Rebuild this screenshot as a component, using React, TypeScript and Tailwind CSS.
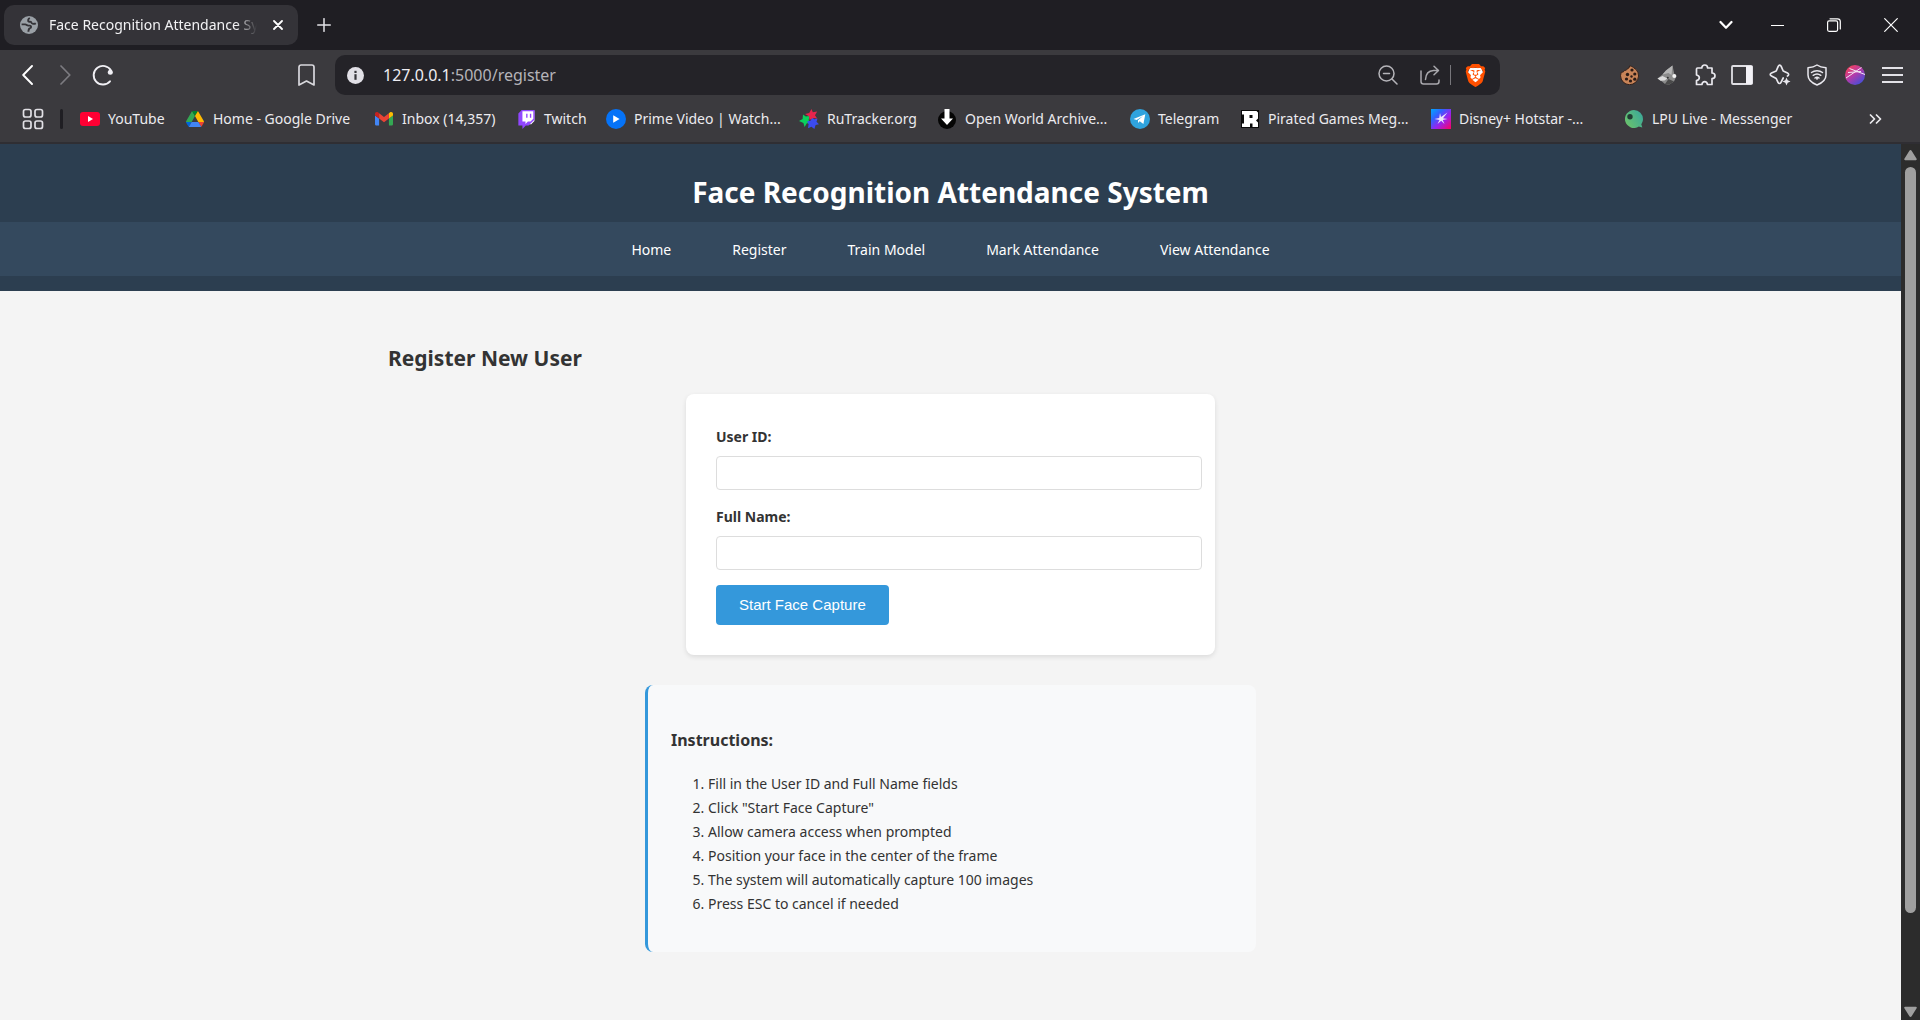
import type { ReactNode } from "react";
import { SiBrave, SiTwitch } from "react-icons/si";

const stroke = {
  fill: "none",
  stroke: "currentColor",
  strokeLinecap: "round" as const,
  strokeLinejoin: "round" as const,
};

function GlobeIcon() {
  return (
    <svg viewBox="0 0 18 18" className="size-[18px] shrink-0">
      <circle cx="9" cy="9" r="9" fill="#9aa0a6" />
      <path
        d="M1.6 8.400h3.600c1.400 0 1.600 1.200 3 1.200h1.600c1.600 0 1.800 2.200.2 2.600-1.400.3-1.500 1.200-1.600 3.600M15.800 7.200c-1.600 1.200-4.300.6-4.600-.8-.2-1-1.400-.4-2.400-.8-1.200-.6-.8-2.600 1-3.600"
        fill="none"
        stroke="#343338"
        strokeWidth="1.900"
      />
    </svg>
  );
}

function YouTubeIcon() {
  return (
    <svg viewBox="0 0 20 20" className="size-5">
      <rect y="3" width="20" height="14" rx="3" fill="#ff0033" />
      <path d="M8 7v6l5-3z" fill="#fff" />
    </svg>
  );
}

function DriveIcon() {
  return (
    <svg viewBox="0 0 87.3 78" className="size-[18px]">
      <path d="m6.6 66.850 3.850 6.650c.8 1.400 1.950 2.500 3.300 3.300l13.750-23.800h-27.500c0 1.550.4 3.100 1.200 4.500z" fill="#0066da" />
      <path d="m43.650 25-13.750-23.800c-1.350.8-2.500 1.900-3.300 3.300l-25.400 44a9.060 9.060 0 0 0 -1.200 4.500h27.500z" fill="#34a853" />
      <path d="m73.550 76.800c1.350-.8 2.500-1.900 3.300-3.300l1.600-2.750 7.650-13.250c.8-1.400 1.200-2.950 1.200-4.500h-27.502l5.852 11.500z" fill="#ea4335" />
      <path d="m43.650 25 13.750-23.800c-1.350-.8-2.900-1.200-4.500-1.200h-18.500c-1.600 0-3.150.45-4.500 1.200z" fill="#00832d" />
      <path d="m59.800 53h-32.300l-13.750 23.800c1.350.8 2.900 1.200 4.500 1.200h50.800c1.600 0 3.150-.45 4.500-1.200z" fill="#4285f4" />
      <path d="m73.400 26.500-12.700-22c-.8-1.400-1.950-2.500-3.300-3.300l-13.750 23.800 16.150 28h27.450c0-1.550-.4-3.100-1.200-4.500z" fill="#ffba00" />
    </svg>
  );
}

function GmailIcon() {
  return (
    <svg viewBox="52 42 88 66" className="w-[18px]">
      <path fill="#4285f4" d="M58 108h14V74L52 59v43c0 3.320 2.690 6 6 6" />
      <path fill="#34a853" d="M120 108h14c3.320 0 6-2.690 6-6V59l-20 15" />
      <path fill="#fbbc04" d="M120 48v26l20-15v-8c0-7.420-8.470-11.650-14.400-7.200" />
      <path fill="#ea4335" d="M72 74V48l24 18 24-18v26L96 92" />
      <path fill="#c5221f" d="M52 51v8l20 15V48l-5.600-4.200c-5.940-4.450-14.400-.22-14.400 7.200" />
    </svg>
  );
}

function TwitchIcon() {
  return (
    <span className="relative block size-[19px]">
      <svg viewBox="0 0 24 24" className="absolute inset-0 size-full">
        <path d="M6 1h16v13l-4 4H6z" fill="#fff" />
      </svg>
      <SiTwitch className="absolute inset-0 size-full text-[#9146ff]" />
    </span>
  );
}

function PrimeIcon() {
  return (
    <svg viewBox="0 0 20 20" className="size-5">
      <circle cx="10" cy="10" r="10" fill="#0573f8" />
      <path d="M7.200 6.200v7.600L13.600 10z" fill="#fff" />
    </svg>
  );
}

function RuTrackerIcon() {
  return (
    <svg viewBox="0 0 20 20" className="size-5">
      <path d="M4 5.500 6.800 7.600l4-.6-1.200 4 2 3.400-3.800-.2L5.600 18 4.400 14 0 12l3.600-2z" fill="#0bd05c" />
      <path d="m13 8 2.200 2.200 3.300-.6-1 3.200 2.500 2.400-3.400.8L15.400 20l-3-2.200L9 19.200l.6-4L8 12.400l3.800-.8z" fill="#3b4bef" />
      <path d="m12.500 0 1.300 3.200 4.400-.6-2.200 3.600 2.200 3.400-4.200-.6L10.600 11l-.6-3.800L6 4.900l4.200-1z" fill="#e6244d" />
    </svg>
  );
}

function DownloadIcon() {
  return (
    <svg viewBox="0 0 20 20" className="size-5">
      <circle cx="10" cy="11" r="9" fill="#050505" />
      <path d="M7.500 0h5v9.500H16l-6 6.500-6-6.500h3.500z" fill="#fff" />
    </svg>
  );
}

function TelegramIcon() {
  return (
    <svg viewBox="0 0 20 20" className="size-5">
      <circle cx="10" cy="10" r="10" fill="#2fa3de" />
      <path d="M3.500 10 15.300 5.300 13.400 15 9.700 12.300 8 14V11.200l5-4.200-6.400 4z" fill="#fff" />
    </svg>
  );
}

function PiratedIcon() {
  return (
    <svg viewBox="0 0 18 18" className="size-[18px]">
      <rect width="18" height="18" fill="#0b0b0b" />
      <path fillRule="evenodd" d="M1 1h14.500l1.500 1.500v6L15 10.500l2 2V17h-5.500V13.500H9V17H1v-3.500h2v-9H1zM8.500 5v3h3V5z" fill="#fff" />
    </svg>
  );
}

function HotstarIcon() {
  return (
    <svg viewBox="0 0 20 20" className="size-5">
      <defs>
        <linearGradient id="hotstar" x1="0" y1="0" x2="1" y2="1">
          <stop offset="0" stopColor="#00a8ff" />
          <stop offset=".3" stopColor="#2f63ff" />
          <stop offset=".6" stopColor="#9a22ee" />
          <stop offset="1" stopColor="#ff0060" />
        </linearGradient>
      </defs>
      <rect width="20" height="20" fill="url(#hotstar)" />
      <path d="m9 4 1 4 6.500-4.500-4.500 5.700 4.500.8-4.800.9L13.500 15l-3.300-3.300L6.500 15l2-4L3.500 10l4.700-1z" fill="#ece6fa" />
    </svg>
  );
}

function LpuIcon() {
  return (
    <svg viewBox="0 0 18 18" className="size-[18px]">
      <defs>
        <linearGradient id="lpu" x1="0" y1=".8" x2="1" y2=".2">
          <stop offset="0" stopColor="#6cc36a" />
          <stop offset="1" stopColor="#3aa89a" />
        </linearGradient>
      </defs>
      <path d="M9 0a9 9 0 0 1 9 9c0 2-.7 3.800-1.700 5.200l1 3.400-3.500-1A9 9 0 1 1 9 0z" fill="url(#lpu)" />
      <circle cx="5" cy="6.800" r="2.700" fill="#223c34" />
    </svg>
  );
}

type Bookmark = { label: string; icon: ReactNode; width: string };

const bookmarks: Bookmark[] = [
  { label: "YouTube", icon: <YouTubeIcon />, width: "w-[105px]" },
  { label: "Home - Google Drive", icon: <DriveIcon />, width: "w-[189px]" },
  { label: "Inbox (14,357)", icon: <GmailIcon />, width: "w-[142px]" },
  { label: "Twitch", icon: <TwitchIcon />, width: "w-[90px]" },
  { label: "Prime Video | Watch...", icon: <PrimeIcon />, width: "w-[193px]" },
  { label: "RuTracker.org", icon: <RuTrackerIcon />, width: "w-[138px]" },
  { label: "Open World Archive...", icon: <DownloadIcon />, width: "w-[193px]" },
  { label: "Telegram", icon: <TelegramIcon />, width: "w-[110px]" },
  { label: "Pirated Games Meg...", icon: <PiratedIcon />, width: "w-[191px]" },
  { label: "Disney+ Hotstar -...", icon: <HotstarIcon />, width: "w-[193px]" },
  { label: "LPU Live - Messenger", icon: <LpuIcon />, width: "w-[193px]" },
];

function TabStrip() {
  return (
    <div className="flex h-[50px] shrink-0 items-center bg-[#1f1e23] pl-1">
      <div className="flex h-10 w-[294px] items-center rounded-[10px] bg-[#343338] pr-[10px] pl-4">
        <GlobeIcon />
        <span className="ml-[11px] w-[208px] overflow-hidden mask-r-from-90% text-sm whitespace-nowrap text-[#f2f2f4]">
          Face Recognition Attendance System
        </span>
        <button aria-label="Close tab" className="ml-auto flex size-5 items-center justify-center text-white">
          <svg viewBox="0 0 10 10" className="size-[10px]" {...stroke} strokeWidth="1.800">
            <path d="m1 1 8 8M9 1 1 9" />
          </svg>
        </button>
      </div>
      <button aria-label="New tab" className="ml-4 flex size-5 items-center justify-center text-[#e4e3e8]">
        <svg viewBox="0 0 14 14" className="size-[14px]" {...stroke} strokeWidth="1.500">
          <path d="M7 .7v12.600M.7 7h12.600" />
        </svg>
      </button>
      <div className="ml-auto flex items-center text-white">
        <button aria-label="Search tabs" className="flex h-[50px] w-11 items-center justify-center">
          <svg viewBox="0 0 14 10" className="w-[14px]" {...stroke} strokeWidth="2.200">
            <path d="m1.500 2 5.500 5.800L12.500 2" />
          </svg>
        </button>
        <button aria-label="Minimize" className="flex h-[50px] w-[58px] items-center justify-center">
          <span className="h-px w-[13px] bg-white" />
        </button>
        <button aria-label="Restore" className="flex h-[50px] w-[55px] items-center justify-center">
          <svg viewBox="0 0 14 14" className="size-[14px]" {...stroke} strokeWidth="1.200">
            <rect x=".6" y="2.900" width="10" height="10.400" rx="1.500" />
            <path d="M3 .8h7.500c1.800 0 2.800 1 2.800 2.800V11" />
          </svg>
        </button>
        <button aria-label="Close" className="flex h-[50px] w-[59px] items-center justify-center">
          <svg viewBox="0 0 14 14" className="size-[14px]" {...stroke} strokeWidth="1.200">
            <path d="m.7.7 12.600 12.600M13.300.7.7 13.300" />
          </svg>
        </button>
      </div>
    </div>
  );
}

function ExtensionButton({ label, children }: { label: string; children: ReactNode }) {
  return (
    <button aria-label={label} className="flex h-8 items-center justify-center text-[#e9e8ee]">
      {children}
    </button>
  );
}

function Toolbar() {
  return (
    <div className="flex h-[50px] shrink-0 items-center">
      <button aria-label="Back" className="ml-[7px] flex size-10 items-center justify-center text-white">
        <svg viewBox="0 0 11 20" className="h-5" {...stroke} strokeWidth="1.900">
          <path d="M10 1 1.200 10l8.800 9" />
        </svg>
      </button>
      <button aria-label="Forward" className="ml-px flex w-[34px] items-center justify-center text-[#7c7b80]">
        <svg viewBox="0 0 11 20" className="h-5" {...stroke} strokeWidth="1.700">
          <path d="m1 1 8.800 9L1 19" />
        </svg>
      </button>
      <button aria-label="Reload" className="ml-[10px] flex size-[22px] items-center justify-center text-[#f0eff4]">
        <svg viewBox="0 0 22 22" className="size-[22px]" {...stroke} strokeWidth="1.900">
          <path d="M18 17.300A9.300 9.300 0 1 1 19 6.500" />
          <circle cx="18.300" cy="8.200" r="2.500" fill="currentColor" stroke="none" />
        </svg>
      </button>
      <button aria-label="Bookmark this page" className="mr-5 ml-[184px] text-[#d9d8dd]">
        <svg viewBox="0 0 17 22" className="h-[22px]" {...stroke} strokeWidth="1.700">
          <path d="M1 3.200C1 1.900 1.900 1 3.200 1h10.600C15.100 1 16 1.900 16 3.200V21l-7.500-4L1 21z" />
        </svg>
      </button>
      <div className="flex h-10 min-w-0 flex-1 items-center rounded-[10px] bg-[#242328] pl-3">
        <svg viewBox="0 0 17 17" className="size-[17px] shrink-0" aria-hidden="true">
          <circle cx="8.500" cy="8.500" r="8.500" fill="#e1e0e6" />
          <rect x="7.400" y="7.200" width="2.200" height="5.600" fill="#36353a" />
          <rect x="7.400" y="3.800" width="2.200" height="2.200" fill="#36353a" />
        </svg>
        <div className="ml-[19px] flex-1 text-base whitespace-nowrap text-[#b5b4b9]">
          <span className="text-[#eeedf2]">127.0.0.1</span>:5000/register
        </div>
        <button aria-label="Zoom" className="text-[#b5b4b9]">
          <svg viewBox="0 0 20 20" className="size-5" {...stroke} strokeWidth="1.500">
            <circle cx="8.500" cy="8.500" r="7.500" />
            <path d="m14 14 5 5M5.500 8.500h6" />
          </svg>
        </button>
        <button aria-label="Share" className="ml-[22px] text-[#a9a8ad]">
          <svg viewBox="0 0 20 20" className="size-5" {...stroke} strokeWidth="1.500">
            <path d="M1 6v10.500C1 18 2 19 3.500 19h13c1.500 0 2.500-1 2.500-2.500V15" />
            <path d="M5.500 14.500C5.800 9 9 5.700 13.500 5.500H18M14 1.200l4.500 4.300L14 9.800" />
          </svg>
        </button>
        <span className="ml-[10px] h-5 w-px bg-[#77767b]" />
        <button aria-label="Brave Shields" className="relative mr-[13px] ml-[13px] block size-[23px]">
          <svg viewBox="0 0 24 24" className="absolute inset-0 size-full">
            <path d="M6 4h12l2 5-3 9-5 4-5-4-3-9z" fill="#fff" />
          </svg>
          <SiBrave className="absolute inset-0 size-full text-[#ff5000]" />
        </button>
      </div>
      <div className="mr-[9px] ml-[111px] grid w-[300px] grid-cols-8">
        <ExtensionButton label="Cookie editor">
          <svg viewBox="0 0 20 20" className="size-5">
            <path
              d="M10.500 1c0 1.600.8 2.600 2.200 2.600.3 1.400 1.300 2 2.600 1.700.8 1.500 2 2 3.500 2A9 9 0 1 1 6.500 2.600C7.700 1.600 9 1 10.500 1z"
              fill="#c98458"
              stroke="#33221c"
              strokeWidth="1"
              transform="matrix(-1 0 0 1 20 0)"
            />
            <g fill="#2b1b16">
              <circle cx="12" cy="5" r="1.600" />
              <circle cx="7.500" cy="9.500" r="1.700" />
              <circle cx="14.800" cy="9" r="1.600" />
              <circle cx="11.500" cy="11.500" r="1.200" />
              <circle cx="6.500" cy="14" r="1.600" />
              <circle cx="10.500" cy="16" r="1.600" />
              <circle cx="14.800" cy="14.200" r="1.600" />
            </g>
          </svg>
        </ExtensionButton>
        <ExtensionButton label="Wolf extension">
          <svg viewBox="0 0 20 20" className="size-5">
            <path d="M15.500.5 9 5.500 5.500 9.500.5 13.500l3.500 2.300L8 19l4 .8 5-3.300 2.500-5.500-2-1z" fill="#8b8b8b" />
            <path d="M15.500.5 9 5.500 5.500 9.500l6-1.500 3 2z" fill="#b5b5b5" />
            <path d="m.5 13.500 5-2.500 5 2.500-3 2-4 .3z" fill="#dcdcdc" />
            <path d="m8 19 3.500-5 5.500 2.500-5 3.300z" fill="#4a4a4a" />
            <circle cx="17.300" cy="11" r="2" fill="#f4f4f4" />
            <circle cx="10.800" cy="12.800" r="1" fill="#333" />
          </svg>
        </ExtensionButton>
        <ExtensionButton label="Extensions">
          <svg viewBox="0 0 22 22" className="size-[22px]" {...stroke} strokeWidth="1.700">
            <path d="M3.500 4h4.300c0-1.800 1.100-3 2.900-3s2.900 1.200 2.900 3H18v5c1.800 0 3 1 3 2.800s-1.200 2.900-3 2.900V20.500h-4.500c-.3-1.900-1.200-2.800-2.800-2.800s-2.500.9-2.800 2.800H2.500v-4c1.900-.4 2.800-1.300 2.800-2.800s-.9-2.400-2.800-2.700V5c0-.6.4-1 1-1z" />
          </svg>
        </ExtensionButton>
        <ExtensionButton label="Sidebar">
          <svg viewBox="0 0 22 20" className="w-[22px]" fill="none">
            <rect x="1" y="1" width="20" height="18" rx="1" stroke="#e0dfe4" strokeWidth="1.800" />
            <rect x="15" y="1" width="6.500" height="18" fill="#f3f2f7" />
          </svg>
        </ExtensionButton>
        <ExtensionButton label="Leo AI">
          <svg viewBox="0 0 22 22" className="size-[22px]" {...stroke} strokeWidth="1.700">
            <path d="M14.200 14 12 18.300c-.8 1.600-2.200 1.600-3 0L7.200 14.500 2.500 12c-1.700-.8-1.700-2.200 0-3l4.700-2 2-4.700c.8-1.700 2.200-1.700 3 0l2 4.700 4.300 2c1.500.8 1.500 2.200 0 3" />
            <path d="M17.500 13.500 18.700 16.300 21.500 17.500 18.700 18.700 17.500 21.500 16.300 18.700 13.500 17.500 16.300 16.300z" fill="currentColor" stroke="none" />
          </svg>
        </ExtensionButton>
        <ExtensionButton label="VPN">
          <svg viewBox="0 0 20 22" className="h-[22px]" {...stroke} strokeWidth="1.500">
            <path d="M10 1c2.400 1.700 5.200 2.500 9 2.800V11c0 4.500-3.300 7.800-9 10-5.700-2.200-9-5.500-9-10V3.800C4.800 3.500 7.600 2.700 10 1z" />
            <path d="M4.500 8.500c3-2.400 8-2.400 11 0M6.200 11.300c2.300-1.700 5.300-1.700 7.600 0M8 14c1.200-.9 2.800-.9 4 0" />
            <circle cx="10" cy="14.800" r="1" fill="currentColor" stroke="none" />
          </svg>
        </ExtensionButton>
        <ExtensionButton label="Profile">
          <svg viewBox="0 0 20 20" className="size-5">
            <defs>
              <linearGradient id="avatar" x1=".1" y1=".1" x2=".8" y2="1">
                <stop offset="0" stopColor="#f5425a" />
                <stop offset=".45" stopColor="#b53aa9" />
                <stop offset="1" stopColor="#3b50dd" />
              </linearGradient>
            </defs>
            <circle cx="10" cy="10" r="10" fill="url(#avatar)" />
            <path d="M1 13 16.500 2.500M4.500 3.500 20 9.500M3 7.500l13-1" stroke="#f3e6f5" strokeWidth="1" fill="none" />
          </svg>
        </ExtensionButton>
        <ExtensionButton label="Menu">
          <span className="flex w-[21px] flex-col gap-[5px]">
            <span className="h-0.5 bg-[#e3e2e7]" />
            <span className="h-0.5 bg-[#e3e2e7]" />
            <span className="h-0.5 bg-[#e3e2e7]" />
          </span>
        </ExtensionButton>
      </div>
    </div>
  );
}

function BookmarksBar() {
  return (
    <nav aria-label="Bookmarks" className="flex h-11 shrink-0 items-center border-b-2 border-[#2f2e33] pb-1 text-sm text-[#ecebef]">
      <button aria-label="All bookmarks" className="ml-[22px] text-[#e1e0e5]">
        <svg viewBox="0 0 22 22" className="size-[22px]" {...stroke} strokeWidth="1.700">
          <rect x="1.500" y="1.500" width="7.500" height="7.500" rx="2" />
          <rect x="13" y="1.500" width="7.500" height="7.500" rx="2" />
          <rect x="1.500" y="13" width="7.500" height="7.500" rx="2" />
          <rect x="13" y="13" width="7.500" height="7.500" rx="2" />
        </svg>
      </button>
      <span className="mr-[17px] ml-4 h-5 w-[3px] rounded-full bg-[#1f1e23]" />
      <div className="flex min-w-0 flex-1 overflow-hidden">
        {bookmarks.map((b) => (
          <a key={b.label} href="#" className={`flex shrink-0 items-center gap-2 whitespace-nowrap ${b.width}`}>
            <span className="flex size-5 shrink-0 items-center justify-center">{b.icon}</span>
            {b.label}
          </a>
        ))}
      </div>
      <button aria-label="More bookmarks" className="mr-[38px]">
        <svg viewBox="0 0 13 10" className="w-[13px]" {...stroke} strokeWidth="1.700">
          <path d="m1.500 1 4 4-4 4M7.500 1l4 4-4 4" />
        </svg>
      </button>
    </nav>
  );
}

const links = ["Home", "Register", "Train Model", "Mark Attendance", "View Attendance"];

const steps = [
  "Fill in the User ID and Full Name fields",
  'Click "Start Face Capture"',
  "Allow camera access when prompted",
  "Position your face in the center of the frame",
  "The system will automatically capture 100 images",
  "Press ESC to cancel if needed",
];

function Field({ id, label }: { id: string; label: string }) {
  return (
    <div className="mb-[15px]">
      <label htmlFor={id} className="mb-[7px] block leading-6 font-bold">
        {label}
      </label>
      {/* The field is wider than the form's content box and runs into its right padding. */}
      <input id={id} type="text" className="block h-[34px] w-[calc(100%+17px)] rounded-sm border border-[#ddd] bg-white px-2" />
    </div>
  );
}

function RegisterPage() {
  return (
    <div className="min-w-0 flex-1 overflow-hidden bg-[#f4f4f4] text-sm text-[#333]">
      <header className="bg-[#2c3e50] pb-[15px] text-center text-white">
        <h1 className="pt-7 pb-[10px] text-[28px] leading-10 font-bold">Face Recognition Attendance System</h1>
        <nav className="flex h-[54px] items-center justify-center gap-[61px] bg-[#34495e] pt-px">
          {links.map((l) => (
            <a key={l} href="#">
              {l}
            </a>
          ))}
        </nav>
      </header>
      <main className="mx-auto max-w-[1125px] pt-[49px]">
        <h2 className="mb-[18px] text-[21px] leading-9 font-bold">Register New User</h2>
        <form className="mx-auto max-w-[529px] rounded-lg bg-white px-[30px] pt-[31px] pb-[30px] shadow-[0_2px_5px_rgba(0,0,0,0.1)]">
          <Field id="user-id" label="User ID:" />
          <Field id="full-name" label="Full Name:" />
          <button type="button" className="h-10 rounded-sm bg-[#3498db] px-[23px] font-['Liberation_Sans',Arial,sans-serif] text-[15px] text-white">
            Start Face Capture
          </button>
        </form>
        <section className="mx-auto mt-[30px] max-w-[611px] rounded-lg border-l-[3px] border-[#3498db] bg-[#f8f9fa] px-[23px] pt-[41px] pb-9">
          <h3 className="mb-[18px] text-base leading-7 font-bold">Instructions:</h3>
          <ol className="list-decimal pl-[37px] leading-6">
            {steps.map((s) => (
              <li key={s}>{s}</li>
            ))}
          </ol>
        </section>
      </main>
    </div>
  );
}

function Scrollbar() {
  return (
    <div aria-hidden="true" className="flex w-[19px] shrink-0 flex-col items-center bg-[#2c2c2c] pt-1 pb-[3px] text-[#9f9f9f]">
      <svg viewBox="0 0 13 12" className="my-0.5 w-[13px]" fill="currentColor">
        <path d="M6.500 0c.5 0 .8.300 1.100.7l5 8c.5.800.1 1.500-.8 1.500H1.200C.3 10.200-.1 9.500.4 8.700l5-8c.3-.4.600-.7 1.100-.7z" />
      </svg>
      <div className="flex min-h-0 flex-1 flex-col pt-[3px]">
        <div className="h-[89%] w-[11px] rounded-full bg-[#9f9f9f]" />
      </div>
      <svg viewBox="0 0 13 12" className="w-[13px]" fill="currentColor">
        <path d="M6.500 12c.5 0 .8-.3 1.100-.7l5-8c.5-.8.1-1.500-.8-1.500H1.200C.3 1.800-.1 2.500.4 3.300l5 8c.3.400.600.700 1.100.700z" />
      </svg>
    </div>
  );
}

export default function App() {
  return (
    <div className="flex h-screen flex-col overflow-hidden bg-[#3b3a3e] font-['Noto_Sans','Open_Sans',sans-serif]">
      <TabStrip />
      <Toolbar />
      <BookmarksBar />
      <div className="flex min-h-0 flex-1">
        <RegisterPage />
        <Scrollbar />
      </div>
    </div>
  );
}
